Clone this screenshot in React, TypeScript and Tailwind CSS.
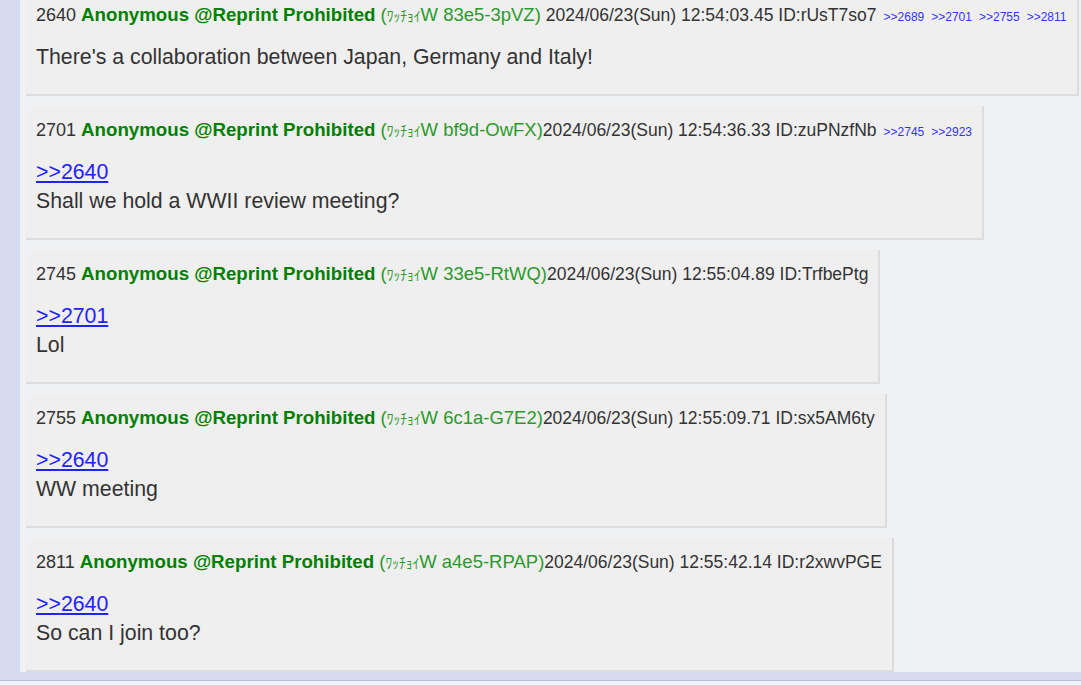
import React from "react";

type Post = {
  no: string;
  trip: string;
  gap: boolean;
  date: string;
  id: string;
  refs: string[];
  anchor?: string;
  body: string;
};

const posts: Post[] = [
  {
    no: "2640",
    trip: "83e5-3pVZ",
    gap: true,
    date: "2024/06/23(Sun) 12:54:03.45",
    id: "rUsT7so7",
    refs: ["2689", "2701", "2755", "2811"],
    body: "There's a collaboration between Japan, Germany and Italy!",
  },
  {
    no: "2701",
    trip: "bf9d-OwFX",
    gap: false,
    date: "2024/06/23(Sun) 12:54:36.33",
    id: "zuPNzfNb",
    refs: ["2745", "2923"],
    anchor: "2640",
    body: "Shall we hold a WWII review meeting?",
  },
  {
    no: "2745",
    trip: "33e5-RtWQ",
    gap: false,
    date: "2024/06/23(Sun) 12:55:04.89",
    id: "TrfbePtg",
    refs: [],
    anchor: "2701",
    body: "Lol",
  },
  {
    no: "2755",
    trip: "6c1a-G7E2",
    gap: false,
    date: "2024/06/23(Sun) 12:55:09.71",
    id: "sx5AM6ty",
    refs: [],
    anchor: "2640",
    body: "WW meeting",
  },
  {
    no: "2811",
    trip: "a4e5-RPAP",
    gap: false,
    date: "2024/06/23(Sun) 12:55:42.14",
    id: "r2xwvPGE",
    refs: [],
    anchor: "2640",
    body: "So can I join too?",
  },
];

function PostBox({ p, first }: { p: Post; first: boolean }) {
  return (
    <div
      className={`w-fit max-w-full bg-[#efefef] border-r-2 border-b-2 border-[#dcdcdc] pl-[10px] pr-[10px] pt-[12px] pb-[22px] ${
        first ? "mt-[-9px]" : ""
      }`}
    >
      <div className="whitespace-nowrap text-[18px] leading-[24px] text-[#333333]">
        <span>{p.no} </span>
        <span className="font-bold text-[18.7px] text-[#008000]">Anonymous @Reprint Prohibited</span>
        <span className="text-[18.5px] text-[#2a9a2a]">
          {" "}(<span className="text-[13.5px]">ﾜｯﾁｮｲ</span>W {p.trip})
        </span>
        <span className="text-[17.5px]">
          {p.gap ? " " : ""}
          {p.date} ID:{p.id}
        </span>
        {p.refs.map((r) => (
          <span key={r} className="ml-[7px] text-[12px] text-[#3333ff]">
            &gt;&gt;{r}
          </span>
        ))}
      </div>
      <div className="mt-[14px] text-[21.3px] leading-[29px] text-[#333333]">
        {p.anchor && (
          <div>
            <span className="text-[#2222ff] underline">&gt;&gt;{p.anchor}</span>
          </div>
        )}
        <div>{p.body}</div>
      </div>
    </div>
  );
}

export default function App() {
  return (
    <div
      className="h-[685px] w-[1081px] overflow-hidden bg-[#d6daf0] flex flex-col"
      style={{ fontFamily: '"Liberation Sans", Arial, "Noto Sans CJK JP", sans-serif' }}
    >
      <div className="flex h-[672px] overflow-hidden">
        <div className="w-[20px] shrink-0 bg-[#d6daf0]" />
        <div className="flex-1 bg-[#f0f1f5] pl-[6px] flex flex-col gap-[10px] overflow-hidden">
          {posts.map((p, i) => (
            <PostBox key={p.no} p={p} first={i === 0} />
          ))}
        </div>
      </div>
      <div className="h-[8px] bg-[#d6daf0]" />
      <div className="h-[1px] bg-[#b4c0dc]" />
      <div className="flex-1 bg-[#eef2fb]" />
    </div>
  );
}
